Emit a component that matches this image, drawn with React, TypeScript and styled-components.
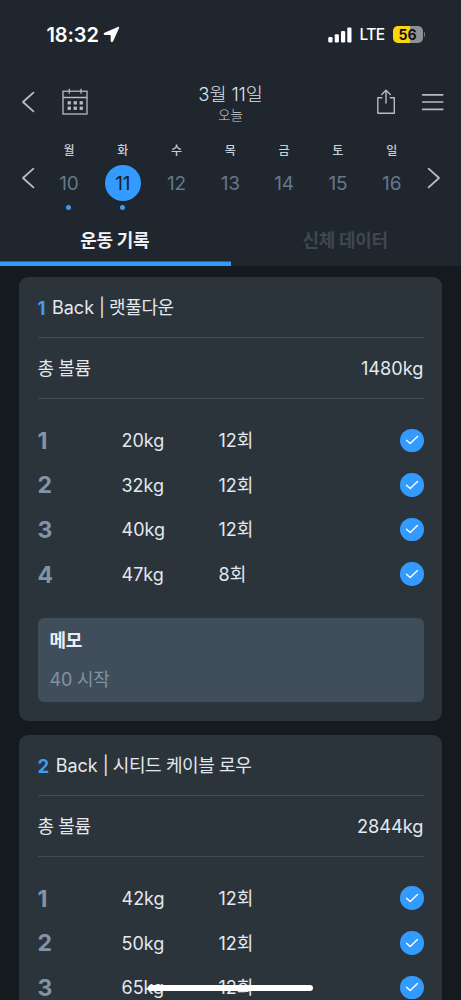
import React from "react";
import styled, { createGlobalStyle } from "styled-components";

const GlobalStyle = createGlobalStyle`
  * { box-sizing: border-box; }
  html, body { margin: 0; padding: 0; background: #151a1f; }
  body {
    font-family: Inter, "Noto Sans CJK KR", sans-serif;
    color: #e3e8ef;
    overflow: hidden;
  }
`;

const Screen = styled.div`
  position: relative;
  width: 461px;
  height: 1000px;
  overflow: hidden;
  background: #151a1f;
`;

const Header = styled.header`
  display: flex;
  flex-direction: column;
  height: 266px;
  background: #20262d;
`;

const StatusBar = styled.div`
  display: flex;
  align-items: center;
  justify-content: space-between;
  height: 69px;
  padding: 0 36px 0 46.5px;
`;

const StatusGroup = styled.div`
  display: flex;
  align-items: center;
`;

const Clock = styled.span`
  font-size: 20px;
  font-weight: 600;
  line-height: 24px;
  letter-spacing: -0.1px;
  color: #fff;
  margin-right: 4px;
`;

const Network = styled.span`
  font-size: 15.5px;
  font-weight: 500;
  line-height: 20px;
  letter-spacing: -0.6px;
  color: #fff;
  margin: 1px 8px 0 8px;
`;

const Battery = styled.div`
  display: flex;
  align-items: center;
  justify-content: center;
  width: 30px;
  height: 17px;
  border-radius: 5px;
  background: linear-gradient(90deg, #fdd60a 0 56%, #8e9194 56%);
  color: #111;
  font-size: 14px;
  font-weight: 700;
  line-height: 17px;
`;

const BatteryTip = styled.div`
  width: 1.5px;
  height: 5px;
  margin-left: 1px;
  border-radius: 0 2px 2px 0;
  background: #75797d;
`;

const NavBar = styled.nav`
  display: grid;
  grid-template-columns: 115px 1fr 115px;
  height: 66px;
`;

const NavSide = styled.div<{ $end?: boolean }>`
  display: flex;
  align-items: center;
  justify-content: ${(p) => (p.$end ? "flex-end" : "flex-start")};
  gap: 26px;
  padding: ${(p) => (p.$end ? "0 17px 0 0" : "0 0 0 21px")};
`;

const NavTitle = styled.div`
  display: flex;
  flex-direction: column;
  align-items: center;
  padding-top: 13px;
`;

const DateText = styled.div`
  font-size: 18.5px;
  font-weight: 300;
  line-height: 24px;
  letter-spacing: -0.1px;
  color: #dde2e9;
`;

const TodayText = styled.div`
  font-size: 13.5px;
  font-weight: 300;
  line-height: 18px;
  color: #ccd2da;
`;

const Week = styled.div`
  display: flex;
  height: 79px;
  padding: 0 20px 0 21px;
`;

const WeekArrow = styled.div`
  display: flex;
  align-items: center;
  width: 14px;
  height: 86px;
`;

const Days = styled.div`
  display: grid;
  grid-template-columns: repeat(7, 53.8px);
  flex: 1;
  margin-left: 7px;
`;

const Day = styled.div`
  display: flex;
  flex-direction: column;
  align-items: center;
  padding-top: 8px;
`;

const DayName = styled.div`
  font-size: 12px;
  font-weight: 500;
  line-height: 16px;
  color: #c9ced7;
`;

const DayNumber = styled.div<{ $active?: boolean }>`
  display: flex;
  align-items: center;
  justify-content: center;
  width: 36px;
  height: 36px;
  margin-top: 6px;
  padding-top: 1px;
  border-radius: 50%;
  background: ${(p) => (p.$active ? "#339bff" : "transparent")};
  color: ${(p) => (p.$active ? "#17202a" : "#64788c")};
  font-size: 19px;
  line-height: 35px;
  letter-spacing: -0.2px;
`;

const Dot = styled.div`
  width: 5px;
  height: 5px;
  margin-top: 4px;
  border-radius: 50%;
  background: #3e9bf0;
`;

const Tabs = styled.div`
  display: grid;
  grid-template-columns: 1fr 1fr;
  flex: 1;
`;

const Tab = styled.div<{ $active?: boolean }>`
  display: flex;
  justify-content: center;
  padding: 14px 1px 0 0;
  box-shadow: ${(p) => (p.$active ? "inset 0 -4.5px 0 #339bff" : "none")};
  color: ${(p) => (p.$active ? "#eef2f7" : "#3d4853")};
  font-size: 18px;
  font-weight: 700;
  line-height: 26px;
  letter-spacing: -0.3px;
`;

const CardList = styled.main`
  display: flex;
  flex-direction: column;
  gap: 14px;
  padding: 11px 19px 0;
`;

const Card = styled.section`
  padding: 0 18.5px 18.5px;
  border-radius: 9px;
  background: #2b333b;
`;

const CardLine = styled.div`
  display: flex;
  align-items: center;
  height: 61px;
  padding-top: 2px;
  border-bottom: 1px solid #424a53;
  font-size: 18px;
  line-height: 26px;
`;

const CardNumber = styled.span`
  margin-right: 6.5px;
  color: #3e9cf3;
  font-size: 18.5px;
  font-weight: 700;
`;

const BodyPart = styled.span`
  margin-right: 4px;
`;

const KoreanLabel = styled.span`
  letter-spacing: -0.4px;
`;

const Total = styled.span`
  margin-left: auto;
  font-size: 18.2px;
  line-height: 24px;
  padding-bottom: 2px;
`;

const SetList = styled.div`
  padding-top: 19px;
`;

const SetRow = styled.div`
  display: grid;
  grid-template-columns: 84px 97px 1fr 23.5px;
  align-items: center;
  height: 44.6px;
  font-size: 18px;
  line-height: 26px;
`;

const SetIndex = styled.span`
  padding-top: 1px;
  color: #8493a5;
  font-size: 23px;
  font-weight: 700;
`;

const SetValue = styled.span`
  padding-top: 1.5px;
`;

const CheckCircle = styled.div`
  display: flex;
  align-items: center;
  justify-content: center;
  width: 23.5px;
  height: 23.5px;
  border-radius: 50%;
  background: #339bff;
`;

const Memo = styled.div`
  height: 84px;
  margin-top: 22px;
  padding: 10px 12px;
  border-radius: 6px;
  background: #404e5b;
  font-size: 18px;
  line-height: 26px;
  letter-spacing: -0.2px;
`;

const MemoTitle = styled.div`
  font-weight: 700;
  color: #e9eef5;
`;

const MemoText = styled.div`
  margin-top: 13px;
  color: #8191a3;
`;

const HomeIndicator = styled.div`
  position: absolute;
  left: 148px;
  top: 985px;
  width: 165px;
  height: 6px;
  border-radius: 3px;
  background: #fff;
`;

const Chevron = ({ right }: { right?: boolean }) => (
  <svg width="14" height="22" viewBox="0 0 14 22" fill="none" stroke="#b9bec6" strokeWidth="1.8" strokeLinecap="round" strokeLinejoin="round">
    <path d={right ? "M1.6 1.6 12 11 1.6 20.4" : "M12.4 1.6 2 11 12.4 20.4"} />
  </svg>
);

const LocationArrow = () => (
  <svg width="17" height="17" viewBox="0 0 17 17" fill="#fff">
    <path d="M14.800.9 1.500 6.700C.2 7.300.500 9 1.900 9h5.300c.3 0 .5.200.5.500v5.300c0 1.500 1.800 1.800 2.400.4L16 2.200C16.500 1.200 15.800.500 14.800.9Z" />
  </svg>
);

const SignalBars = () => (
  <svg width="24" height="16" viewBox="0 0 24 16" fill="#fff">
    <rect x="0.300" y="10" width="4.200" height="5.500" rx="1.200" />
    <rect x="6.700" y="7.300" width="4.200" height="8.200" rx="1.200" />
    <rect x="13" y="4" width="4.200" height="11.500" rx="1.200" />
    <rect x="19.300" y="0.500" width="4.200" height="15" rx="1.200" />
  </svg>
);

const CalendarIcon = () => (
  <svg width="27" height="28" viewBox="0 0 27 28" fill="none" stroke="#b6bbc4" strokeWidth="1.300">
    <rect x="2" y="3.200" width="24" height="22.800" />
    <path d="M2 9.500h24M8.300.8v5M20 .8v5" />
    <g fill="#b6bbc4" stroke="none">
      {[6.6, 12.6, 18.6].map((x) => (
        <React.Fragment key={x}>
          <rect x={x} y="13.200" width="3.300" height="3.300" />
          <rect x={x} y="18.600" width="3.300" height="3.300" />
        </React.Fragment>
      ))}
    </g>
  </svg>
);

const ShareIcon = () => (
  <svg width="19" height="26" viewBox="0 0 19 26" fill="none" stroke="#b6bbc4" strokeWidth="1.400" strokeLinecap="round" strokeLinejoin="round">
    <path d="M5.800 8.800H1.800v15.400h16.500V8.800h-4.100M10 14V1.500M5.700 5.600 10 1.300l4.300 4.300" />
  </svg>
);

const MenuIcon = () => (
  <svg width="23" height="18" viewBox="0 0 23 18" stroke="#b6bbc4" strokeWidth="1.700" strokeLinecap="round">
    <path d="M1.700 1.800h20M1.700 9h20M1.700 16.400h20" />
  </svg>
);

const CheckIcon = () => (
  <svg width="14" height="12" viewBox="0 0 14 12" fill="none" stroke="#fff" strokeWidth="1.400" strokeLinecap="round" strokeLinejoin="round">
    <path d="M1.500 6.300 5.200 9.600 12.500 2.500" />
  </svg>
);

const days = [
  { name: "월", number: 10, dot: true },
  { name: "화", number: 11, dot: true, active: true },
  { name: "수", number: 12 },
  { name: "목", number: 13 },
  { name: "금", number: 14 },
  { name: "토", number: 15 },
  { name: "일", number: 16 },
];

type Exercise = {
  part: string;
  name: string;
  total: string;
  sets: [string, string][];
  memo?: string;
};

const exercises: Exercise[] = [
  {
    part: "Back",
    name: "랫풀다운",
    total: "1480kg",
    sets: [["20kg", "12회"], ["32kg", "12회"], ["40kg", "12회"], ["47kg", "8회"]],
    memo: "40 시작",
  },
  {
    part: "Back",
    name: "시티드 케이블 로우",
    total: "2844kg",
    sets: [["42kg", "12회"], ["50kg", "12회"], ["65kg", "12회"]],
  },
];

export default function App() {
  return (
    <Screen>
      <GlobalStyle />
      <Header>
        <StatusBar>
          <StatusGroup>
            <Clock>18:32</Clock>
            <LocationArrow />
          </StatusGroup>
          <StatusGroup>
            <SignalBars />
            <Network>LTE</Network>
            <Battery>56</Battery>
            <BatteryTip />
          </StatusGroup>
        </StatusBar>
        <NavBar>
          <NavSide>
            <Chevron />
            <CalendarIcon />
          </NavSide>
          <NavTitle>
            <DateText>3월 11일</DateText>
            <TodayText>오늘</TodayText>
          </NavTitle>
          <NavSide $end>
            <ShareIcon />
            <MenuIcon />
          </NavSide>
        </NavBar>
        <Week>
          <WeekArrow><Chevron /></WeekArrow>
          <Days>
            {days.map((day) => (
              <Day key={day.number}>
                <DayName>{day.name}</DayName>
                <DayNumber $active={day.active}>{day.number}</DayNumber>
                {day.dot && <Dot />}
              </Day>
            ))}
          </Days>
          <WeekArrow><Chevron right /></WeekArrow>
        </Week>
        <Tabs>
          <Tab $active>운동 기록</Tab>
          <Tab>신체 데이터</Tab>
        </Tabs>
      </Header>
      <CardList>
        {exercises.map((exercise, i) => (
          <Card key={exercise.name}>
            <CardLine>
              <CardNumber>{i + 1}</CardNumber>
              <BodyPart>{exercise.part} |</BodyPart>
              <KoreanLabel>{exercise.name}</KoreanLabel>
            </CardLine>
            <CardLine>
              <KoreanLabel>총 볼륨</KoreanLabel>
              <Total>{exercise.total}</Total>
            </CardLine>
            <SetList>
              {exercise.sets.map(([weight, reps], n) => (
                <SetRow key={n}>
                  <SetIndex>{n + 1}</SetIndex>
                  <SetValue>{weight}</SetValue>
                  <SetValue>{reps}</SetValue>
                  <CheckCircle><CheckIcon /></CheckCircle>
                </SetRow>
              ))}
            </SetList>
            {exercise.memo && (
              <Memo>
                <MemoTitle>메모</MemoTitle>
                <MemoText>{exercise.memo}</MemoText>
              </Memo>
            )}
          </Card>
        ))}
      </CardList>
      <HomeIndicator />
    </Screen>
  );
}
